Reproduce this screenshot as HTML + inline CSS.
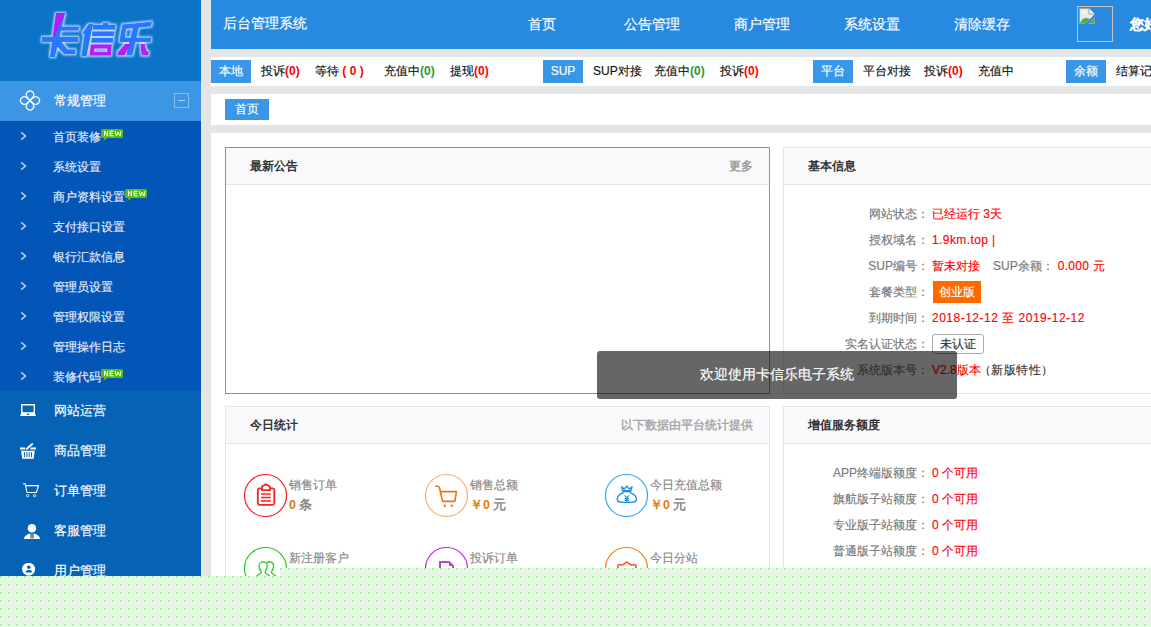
<!DOCTYPE html>
<html><head><meta charset="utf-8">
<style>
*{margin:0;padding:0;box-sizing:border-box}
html,body{-webkit-text-stroke:0.15px currentColor;width:1151px;height:627px;overflow:hidden;background:#e5e5e5;font-family:"Liberation Sans",sans-serif;font-size:12px;color:#333}
.a{position:absolute;white-space:nowrap}
#side{position:absolute;left:0;top:0;width:201px;height:627px;background:#0562b5}
#logo{position:absolute;left:0;top:0;width:201px;height:81px;background:#0b74c9}
#act{position:absolute;left:0;top:81px;width:201px;height:40px;background:#3d95e5}
#sub{position:absolute;left:0;top:121px;width:201px;height:270px;background:#0355b8}
.si{position:absolute;left:0;width:201px;height:30px;line-height:30px;color:#e6eef8;font-size:12px}
.si .t{position:absolute;left:53px;top:1px}
.si .ch{position:absolute;left:20px;top:11px;width:8px;height:8px}
.mi{position:absolute;left:0;width:201px;height:40px;line-height:40px;color:#fff;font-size:13px}
.mi .t{position:absolute;left:54px;top:0}
.new{position:absolute;width:23px;height:13px}
#hdr{position:absolute;left:211px;top:0;width:940px;height:49px;background:#2889e0;color:#fff}
.nav{position:absolute;top:0;width:110px;height:49px;line-height:48px;text-align:center;font-size:14px}
#bar{position:absolute;left:211px;top:57px;width:940px;height:29px;background:#fff}
.bd{position:absolute;top:3px;height:23px;width:40px;line-height:23px;text-align:center;background:#3a96e6;color:#fff;font-size:12px}
.it{position:absolute;white-space:nowrap;top:0;line-height:29px;font-size:12px;color:#111}
.r{color:#f00;font-weight:bold}
.g{color:#2a9a2a;font-weight:bold}
#crumb{position:absolute;left:211px;top:94px;width:940px;height:31px;background:#fff}
#main{position:absolute;left:211px;top:133px;width:940px;height:494px;background:#fff}
.pn{position:absolute;border:1px solid #e6e6e6;background:#fff}
.ph{position:absolute;left:0;top:0;right:0;height:37px;background:#f9f9fb;border-bottom:1px solid #e6e6e6}
.pt{position:absolute;left:24px;top:0;line-height:37px;font-weight:bold;color:#333;font-size:12px}
.pr{position:absolute;right:16px;top:0;line-height:37px;color:#999;font-weight:bold;font-size:12px}
.lb{position:absolute;text-align:right;color:#777;font-size:12px;line-height:16px}
.vl{position:absolute;color:#f00;font-size:12px;line-height:16px}
#ov{position:absolute;left:0;top:576px;width:1151px;height:51px}
#ov2{position:absolute;left:280px;top:568px;width:871px;height:59px}
b,.r,.g,.pt,.pr{-webkit-text-stroke:0}
</style></head><body>
<div id="side">
  <div id="logo">
    <svg class="a" style="left:0;top:0" width="201" height="81" viewBox="0 0 201 81">
      <defs>
        <filter id="gl" x="-20%" y="-20%" width="140%" height="140%">
          <feMorphology in="SourceAlpha" operator="dilate" radius="0.8" result="d"/>
          <feGaussianBlur in="d" stdDeviation="0.9" result="b"/>
          <feFlood flood-color="#e0f0ff" flood-opacity="0.9"/>
          <feComposite in2="b" operator="in" result="w"/>
          <feMerge><feMergeNode in="w"/><feMergeNode in="SourceGraphic"/></feMerge>
        </filter>
      </defs>
      <g filter="url(#gl)">
        <polygon points="56,13 65.2,13 55,57 49.8,57" fill="#2878ff"/>
        <polygon points="56,13 65.2,13 51.9,43" fill="#b31aff"/>
        <polygon points="59.5,26.5 79,26.5 78.8,30.8 58.5,30.8" fill="#2878ff"/>
        <polygon points="42,36.8 78.2,36.8 78,42 41.8,42" fill="#2878ff"/>
        <polygon points="56.5,42 61.5,42 67.5,49.2 75.5,49.2 75.3,54.2 64.5,54.2 55.5,45" fill="#2878ff"/>
        <polygon points="88.6,24 93.2,24 86.6,56 81.4,56 84.3,34.5 82.4,33" fill="#2878ff"/>
        <polygon points="103,23 108.6,23 108.6,25 103,25" fill="#2878ff"/>
        <polygon points="93,24.7 115.6,24.7 115.2,29.7 92.5,29.7" fill="#2878ff"/>
        <polygon points="92.3,31.2 114.2,31.2 113.8,36.2 91.8,36.2" fill="#2878ff"/>
        <polygon points="91.5,37.7 113.4,37.7 113,42.7 91,42.7" fill="#2878ff"/>
        <path d="M90.6,44.2 H112 L110.9,55.7 H89.4 Z M94.4,48.8 V51.9 H107.1 V48.8 Z" fill="#b31aff" fill-rule="evenodd"/>
        <polygon points="122.4,24.6 152,21.4 151.2,26.6 125.2,29.1" fill="#2878ff"/>
        <polygon points="122.4,24.6 126.6,24.6 125,38 119.8,38" fill="#2878ff"/>
        <polygon points="119.8,37.5 151.2,37.5 150.8,42 119.4,42" fill="#2878ff"/>
        <polygon points="133,27 139,27 132.4,55.6 126,55.6" fill="#2878ff"/>
        <polygon points="124.8,44 130.6,44 124.6,55.6 117.2,55.6 117.6,52.6" fill="#b31aff"/>
        <polygon points="140.3,44 144.8,44 146.4,50.6 148.8,51.8 148.6,55.6 141.5,55.6" fill="#b31aff"/>
      </g>
    </svg>
  </div>
  <div id="act">
    <svg class="a" style="left:10px;top:9px" width="40" height="22" viewBox="-20 -10.5 40 22" fill="none" stroke="#fff" stroke-width="1.2"><path transform="rotate(0)" d="M0,0 L-2.85,-3.44 A3.7,3.7 0 1 1 2.85,-3.44 Z"/><path transform="rotate(90)" d="M0,0 L-2.85,-3.44 A3.7,3.7 0 1 1 2.85,-3.44 Z"/><path transform="rotate(180)" d="M0,0 L-2.85,-3.44 A3.7,3.7 0 1 1 2.85,-3.44 Z"/><path transform="rotate(270)" d="M0,0 L-2.85,-3.44 A3.7,3.7 0 1 1 2.85,-3.44 Z"/></svg>
    <div class="a" style="left:54px;top:0;line-height:40px;font-size:13px;color:#fff">常规管理</div>
    <div class="a" style="left:174px;top:12px;width:15px;height:15px;border:1px solid rgba(255,255,255,.38)"></div>
    <div class="a" style="left:178px;top:19px;width:7px;height:1px;background:rgba(255,255,255,.6)"></div>
  </div>
  <div id="sub">
<div class="si" style="top:0px"><svg class="ch" viewBox="0 0 8 8"><path d="M1.3,0.4 L5.4,4 L1.3,7.6" fill="none" stroke="#bcd3f0" stroke-width="1.5"/></svg><span class="t">首页装修</span><svg class="new" style="left:101px;top:8px" width="23" height="13" viewBox="0 0 23 13"><path d="M1,0 H21 L22,1 V8 L21,9 H6.5 Q4.5,11 2.3,12 Q3.6,10.5 3.2,9 H1 L0,8 V1 Z" fill="#52bf0c"/><path d="M3.5,7.2 V1.9 L6.6,7.2 V1.9 M12.6,2.2 H9.1 V6.8 H12.6 M9.1,4.5 H12.2 M14.3,2 L15.4,7 L17.2,3.2 L19,7 L20.1,2" fill="none" stroke="#fff" stroke-width="1"/></svg></div>
<div class="si" style="top:30px"><svg class="ch" viewBox="0 0 8 8"><path d="M1.3,0.4 L5.4,4 L1.3,7.6" fill="none" stroke="#bcd3f0" stroke-width="1.5"/></svg><span class="t">系统设置</span></div>
<div class="si" style="top:60px"><svg class="ch" viewBox="0 0 8 8"><path d="M1.3,0.4 L5.4,4 L1.3,7.6" fill="none" stroke="#bcd3f0" stroke-width="1.5"/></svg><span class="t">商户资料设置</span><svg class="new" style="left:125px;top:8px" width="23" height="13" viewBox="0 0 23 13"><path d="M1,0 H21 L22,1 V8 L21,9 H6.5 Q4.5,11 2.3,12 Q3.6,10.5 3.2,9 H1 L0,8 V1 Z" fill="#52bf0c"/><path d="M3.5,7.2 V1.9 L6.6,7.2 V1.9 M12.6,2.2 H9.1 V6.8 H12.6 M9.1,4.5 H12.2 M14.3,2 L15.4,7 L17.2,3.2 L19,7 L20.1,2" fill="none" stroke="#fff" stroke-width="1"/></svg></div>
<div class="si" style="top:90px"><svg class="ch" viewBox="0 0 8 8"><path d="M1.3,0.4 L5.4,4 L1.3,7.6" fill="none" stroke="#bcd3f0" stroke-width="1.5"/></svg><span class="t">支付接口设置</span></div>
<div class="si" style="top:120px"><svg class="ch" viewBox="0 0 8 8"><path d="M1.3,0.4 L5.4,4 L1.3,7.6" fill="none" stroke="#bcd3f0" stroke-width="1.5"/></svg><span class="t">银行汇款信息</span></div>
<div class="si" style="top:150px"><svg class="ch" viewBox="0 0 8 8"><path d="M1.3,0.4 L5.4,4 L1.3,7.6" fill="none" stroke="#bcd3f0" stroke-width="1.5"/></svg><span class="t">管理员设置</span></div>
<div class="si" style="top:180px"><svg class="ch" viewBox="0 0 8 8"><path d="M1.3,0.4 L5.4,4 L1.3,7.6" fill="none" stroke="#bcd3f0" stroke-width="1.5"/></svg><span class="t">管理权限设置</span></div>
<div class="si" style="top:210px"><svg class="ch" viewBox="0 0 8 8"><path d="M1.3,0.4 L5.4,4 L1.3,7.6" fill="none" stroke="#bcd3f0" stroke-width="1.5"/></svg><span class="t">管理操作日志</span></div>
<div class="si" style="top:240px"><svg class="ch" viewBox="0 0 8 8"><path d="M1.3,0.4 L5.4,4 L1.3,7.6" fill="none" stroke="#bcd3f0" stroke-width="1.5"/></svg><span class="t">装修代码</span><svg class="new" style="left:101px;top:8px" width="23" height="13" viewBox="0 0 23 13"><path d="M1,0 H21 L22,1 V8 L21,9 H6.5 Q4.5,11 2.3,12 Q3.6,10.5 3.2,9 H1 L0,8 V1 Z" fill="#52bf0c"/><path d="M3.5,7.2 V1.9 L6.6,7.2 V1.9 M12.6,2.2 H9.1 V6.8 H12.6 M9.1,4.5 H12.2 M14.3,2 L15.4,7 L17.2,3.2 L19,7 L20.1,2" fill="none" stroke="#fff" stroke-width="1"/></svg></div>

  </div>
<div class="mi" style="top:391px"><svg class="a" style="left:20px;top:13px" width="17" height="13" viewBox="0 0 17 13"><path d="M1.8,0.8 H14.3 V9 H1.8 Z" fill="none" stroke="#fff" stroke-width="1.4"/><path d="M1.3,8.7 H14.8 L16,11.9 H0 Z" fill="#fff"/><ellipse cx="8" cy="10.3" rx="1.5" ry="0.7" fill="#0562b5"/></svg><span class="t">网站运营</span></div>
<div class="mi" style="top:431px"><svg class="a" style="left:19px;top:11px" width="18" height="17" viewBox="0 0 18 17"><path d="M1,6.5 H6 M11.5,6.5 H17" stroke="#fff" stroke-width="1.8"/><path d="M7.6,7 L13.2,2" stroke="#fff" stroke-width="1.8" stroke-linecap="round"/><path d="M2,8.8 H15.8 L14.6,16.7 H3.3 Z" fill="#fff"/><path d="M5.6,10.2 V15.2 M7.9,10.2 V15.2 M10.2,10.2 V15.2 M12.5,10.2 V15.2" stroke="#0562b5" stroke-width="1"/></svg><span class="t">商品管理</span></div>
<div class="mi" style="top:471px"><svg class="a" style="left:22px;top:12px" width="17" height="15" viewBox="0 0 17 15"><path d="M1,0.8 H3.2 L5,9.5 H14.5 L16.4,2.6 H3.6" fill="none" stroke="#fff" stroke-width="1.1"/><circle cx="5.6" cy="12.6" r="1.1" fill="none" stroke="#fff" stroke-width="0.9"/><circle cx="12.6" cy="12.6" r="1.1" fill="none" stroke="#fff" stroke-width="0.9"/></svg><span class="t">订单管理</span></div>
<div class="mi" style="top:511px"><svg class="a" style="left:23px;top:12px" width="18" height="17" viewBox="0 0 18 17"><circle cx="8.9" cy="5.2" r="4.3" fill="#fff"/><path d="M0.8,15.9 C1.5,12.5 5,10.5 9,10.5 C13,10.5 16.5,12.5 17.1,15.9 Z" fill="#fff"/><rect x="7.4" y="10.3" width="3.2" height="5" fill="#0562b5"/><rect x="8.5" y="11.2" width="1" height="3.8" fill="#9fc0e4"/></svg><span class="t">客服管理</span></div>
<div class="mi" style="top:551px"><svg class="a" style="left:21px;top:12px" width="15" height="15" viewBox="0 0 15 15"><circle cx="7.6" cy="6.2" r="6.5" fill="#fff"/><circle cx="7.8" cy="4.3" r="1.8" fill="#0562b5"/><path d="M4.5,9.6 C4.6,7.6 6,7 7.8,7 C9.6,7 11,7.6 11.1,9.6 Z" fill="#0562b5"/></svg><span class="t">用户管理</span></div>

</div>
<div id="hdr">
  <div class="a" style="left:12px;top:0;line-height:47px;font-size:14px">后台管理系统</div>
  <div class="nav" style="left:276px">首页</div>
  <div class="nav" style="left:386px">公告管理</div>
  <div class="nav" style="left:496px">商户管理</div>
  <div class="nav" style="left:606px">系统设置</div>
  <div class="nav" style="left:716px">清除缓存</div>
  <div class="a" style="left:866px;top:6px;width:36px;height:36px;border:1px solid #c9c0b0"></div>
  <svg class="a" style="left:868px;top:8px" width="16" height="16" viewBox="0 0 16 16">
    <path d="M0.5,0.5 H10 L15.5,6 V15.5 H0.5 Z" fill="#e8eaf2" stroke="#a89c8c"/>
    <path d="M10,0.5 V6 H15.5" fill="#fff" stroke="#a89c8c"/>
    <path d="M3,5 L5,3 L7,5 Z" fill="#fff"/>
    <path d="M1,15 C3,10 7,9 11,11 L7,15 Z" fill="#5cae3c"/>
    <path d="M10,15 L15,10 V15 Z" fill="#5cae3c"/>
    <path d="M6,16 L16,6 V9 L9,16 Z" fill="#2889e0"/>
  </svg>
  <div class="a" style="left:919px;top:0;line-height:48px;font-size:14px;font-weight:bold">您好，admin</div>
</div>
<div id="bar">
  <div class="bd" style="left:0">本地</div>
  <div class="it" style="left:50px">投诉<span class="r">(0)</span></div>
  <div class="it" style="left:104px">等待 <span class="r">( 0 )</span></div>
  <div class="it" style="left:173px">充值中<span class="g">(0)</span></div>
  <div class="it" style="left:239px">提现<span class="r">(0)</span></div>
  <div class="bd" style="left:332px">SUP</div>
  <div class="it" style="left:382px">SUP对接</div>
  <div class="it" style="left:443px">充值中<span class="g">(0)</span></div>
  <div class="it" style="left:509px">投诉<span class="r">(0)</span></div>
  <div class="bd" style="left:602px">平台</div>
  <div class="it" style="left:652px">平台对接</div>
  <div class="it" style="left:713px">投诉<span class="r">(0)</span></div>
  <div class="it" style="left:767px">充值中</div>
  <div class="bd" style="left:855px">余额</div>
  <div class="it" style="left:905px">结算记录</div>
</div>
<div id="crumb">
  <div class="a" style="left:14px;top:5px;width:44px;height:21px;line-height:21px;text-align:center;background:#3a96e6;color:#fff;font-size:12px">首页</div>
</div>
<div id="main">
  <div class="pn" style="left:14px;top:14px;width:545px;height:247px;border-color:#5a9be8">
    <div class="ph"><div class="pt">最新公告</div><div class="pr">更多</div></div>
  </div>
  <div class="pn" style="left:572px;top:14px;width:545px;height:247px">
    <div class="ph"><div class="pt">基本信息</div></div>
  </div>
  <div class="pn" style="left:14px;top:273px;width:545px;height:300px">
    <div class="ph"><div class="pt">今日统计</div><div class="pr" style="color:#aaa">以下数据由平台统计提供</div></div>
  </div>
  <div class="pn" style="left:572px;top:273px;width:545px;height:300px">
    <div class="ph"><div class="pt">增值服务额度</div></div>
  </div>
</div>
<div class="a" style="left:729px;top:202.5px;width:200px;height:22px;line-height:22px;text-align:right;color:#777">网站状态：</div><div class="a" style="left:932px;top:202.5px;height:22px;line-height:22px;display:flex;align-items:center"><span style="color:#f00">已经运行 3天</span></div>
<div class="a" style="left:729px;top:229.0px;width:200px;height:22px;line-height:22px;text-align:right;color:#777">授权域名：</div><div class="a" style="left:932px;top:229.0px;height:22px;line-height:22px;display:flex;align-items:center"><span style="color:#f00;letter-spacing:0.4px">1.9km.top |</span></div>
<div class="a" style="left:729px;top:254.8px;width:200px;height:22px;line-height:22px;text-align:right;color:#777">SUP编号：</div><div class="a" style="left:932px;top:254.8px;height:22px;line-height:22px;display:flex;align-items:center"><span style="color:#f00">暂未对接</span><span style="color:#777;margin-left:13px">SUP余额：</span><span style="color:#f00;margin-left:4px;letter-spacing:0.3px">0.000 元</span></div>
<div class="a" style="left:729px;top:280.5px;width:200px;height:22px;line-height:22px;text-align:right;color:#777">套餐类型：</div><div class="a" style="left:932px;top:280.5px;height:22px;line-height:22px;display:flex;align-items:center"><span style="display:inline-block;background:#ff6a00;color:#fff;width:48px;height:22px;line-height:22px;text-align:center;margin-left:1px">创业版</span></div>
<div class="a" style="left:729px;top:306.6px;width:200px;height:22px;line-height:22px;text-align:right;color:#777">到期时间：</div><div class="a" style="left:932px;top:306.6px;height:22px;line-height:22px;display:flex;align-items:center"><span style="color:#f00;letter-spacing:0.5px">2018-12-12 至 2019-12-12</span></div>
<div class="a" style="left:729px;top:332.6px;width:200px;height:22px;line-height:22px;text-align:right;color:#777">实名认证状态：</div><div class="a" style="left:932px;top:332.6px;height:22px;line-height:22px;display:flex;align-items:center"><span style="display:inline-block;background:#fff;color:#333;border:1px solid #aaa;border-radius:3px;width:52px;height:20px;line-height:18px;text-align:center">未认证</span></div>
<div class="a" style="left:729px;top:358.7px;width:200px;height:22px;line-height:22px;text-align:right;color:#777">系统版本号：</div><div class="a" style="left:932px;top:358.7px;height:22px;line-height:22px;display:flex;align-items:center"><span style="color:#f00">V2.8版本</span><span style="color:#333;margin-left:-2px;letter-spacing:0.5px">（新版特性）</span></div>
<div class="a" style="left:729px;top:461.8px;width:200px;height:22px;line-height:22px;text-align:right;color:#777">APP终端版额度：</div><div class="a" style="left:932px;top:461.8px;height:22px;line-height:22px;display:flex;align-items:center"><span style="color:#f00">0 个可用</span></div>
<div class="a" style="left:729px;top:487.8px;width:200px;height:22px;line-height:22px;text-align:right;color:#777">旗航版子站额度：</div><div class="a" style="left:932px;top:487.8px;height:22px;line-height:22px;display:flex;align-items:center"><span style="color:#f00">0 个可用</span></div>
<div class="a" style="left:729px;top:514.0px;width:200px;height:22px;line-height:22px;text-align:right;color:#777">专业版子站额度：</div><div class="a" style="left:932px;top:514.0px;height:22px;line-height:22px;display:flex;align-items:center"><span style="color:#f00">0 个可用</span></div>
<div class="a" style="left:729px;top:540.2px;width:200px;height:22px;line-height:22px;text-align:right;color:#777">普通版子站额度：</div><div class="a" style="left:932px;top:540.2px;height:22px;line-height:22px;display:flex;align-items:center"><span style="color:#f00">0 个可用</span></div>
<svg class="a" style="left:244px;top:474px" width="43" height="43" viewBox="0 0 43 43"><circle cx="21.5" cy="21.5" r="21" fill="none" stroke="#ff2020" stroke-width="1.2"/><path d="M17.6,14.3 H15.6 A1.8,1.8 0 0 0 13.8,16.1 V29.1 A1.8,1.8 0 0 0 15.6,30.9 H28.5 A1.8,1.8 0 0 0 30.3,29.1 V16.1 A1.8,1.8 0 0 0 28.5,14.3 H26.2" fill="none" stroke="#ff2020" stroke-width="1.8"/><path d="M17.9,16.2 V12.6 L21.9,10.2 L25.9,12.6 V16.2 Z" fill="none" stroke="#ff2020" stroke-width="1.8" stroke-linejoin="round"/><path d="M17,20 H26.8 M17,23.4 H26.8 M17,27 H26.8" stroke="#ff2020" stroke-width="1.5"/></svg><div class="a" style="left:289px;top:475px;line-height:20px;color:#888">销售订单</div><div class="a" style="left:289px;top:495px;line-height:20px;font-size:12.5px"><b style="color:#d47b10">0</b> <b style="color:#888">条</b></div>
<svg class="a" style="left:425px;top:474px" width="43" height="43" viewBox="0 0 43 43"><circle cx="21.5" cy="21.5" r="21" fill="none" stroke="#ffae6e" stroke-width="1.2"/><path d="M10.2,12.3 H12.8 Q14,12.3 14.5,14 L17.6,27.4 H29.8 L31.5,17.6 H15.6" fill="none" stroke="#e87412" stroke-width="1.6" stroke-linejoin="round"/><circle cx="19.8" cy="31.8" r="1.2" fill="#e87412"/><circle cx="26.7" cy="31.8" r="1.2" fill="#e87412"/></svg><div class="a" style="left:470px;top:475px;line-height:20px;color:#888">销售总额</div><div class="a" style="left:470px;top:495px;line-height:20px;font-size:12.5px"><b style="color:#e67e10">￥0</b> <b style="color:#888">元</b></div>
<svg class="a" style="left:605px;top:474px" width="43" height="43" viewBox="0 0 43 43"><circle cx="21.5" cy="21.5" r="21" fill="none" stroke="#3aaaf0" stroke-width="1.2"/><path d="M16.6,12.8 L19.1,15 L21.8,12.2 L24.5,15 L27.1,12.8 L26,16.6 H17.7 Z" fill="none" stroke="#1a90e0" stroke-width="1.3" stroke-linejoin="round"/><path d="M17.4,17.6 H26.2" stroke="#1a90e0" stroke-width="1.4"/><path d="M18.6,18.6 C14,20.2 12.2,23 12.2,25.4 C12.2,27.8 14.5,28.4 21.8,28.4 C29,28.4 31.5,27.8 31.5,25.4 C31.5,23 29.6,20.2 25,18.6" fill="none" stroke="#1a90e0" stroke-width="1.4"/><path d="M19.6,21.4 L21.8,23.8 L24,21.4 M21.8,23.8 V28 M19.6,24.6 H24 M19.6,26.4 H24" fill="none" stroke="#1a90e0" stroke-width="1.2"/></svg><div class="a" style="left:650px;top:475px;line-height:20px;color:#888">今日充值总额</div><div class="a" style="left:650px;top:495px;line-height:20px;font-size:12.5px"><b style="color:#e67e10">￥0</b> <b style="color:#888">元</b></div>
<svg class="a" style="left:244px;top:547px" width="43" height="43" viewBox="0 0 43 43"><circle cx="21.5" cy="21.5" r="21" fill="none" stroke="#22cc22" stroke-width="1.2"/><path d="M12.5,29.5 C14,27 17.3,26.8 17.3,25.2 C17.3,24 15,23 15,19 A4.1,4.1 0 0 1 23.2,19 C23.2,23 21,24 21,25.2 C21,26.8 24.5,27 26,29.5" fill="none" stroke="#22cc22" stroke-width="1.3"/><path d="M22.6,16 A4.1,4.1 0 0 1 29.6,19 C29.6,23 27.4,24 27.4,25.2 C27.4,26.8 30.5,27 32,29.5" fill="none" stroke="#22cc22" stroke-width="1.3"/></svg><div class="a" style="left:289px;top:548px;line-height:20px;color:#888">新注册客户</div>
<svg class="a" style="left:425px;top:547px" width="43" height="43" viewBox="0 0 43 43"><circle cx="21.5" cy="21.5" r="21" fill="none" stroke="#cc22dd" stroke-width="1.2"/><path d="M15,34 V15 H24 L28,19 V34" fill="none" stroke="#c040cc" stroke-width="2"/><path d="M24,15 V19 H28 Z" fill="#c040cc"/></svg><div class="a" style="left:470px;top:548px;line-height:20px;color:#888">投诉订单</div>
<svg class="a" style="left:605px;top:547px" width="43" height="43" viewBox="0 0 43 43"><circle cx="21.5" cy="21.5" r="21" fill="none" stroke="#f08020" stroke-width="1.2"/><path d="M12.5,19.8 C12.5,18 14.2,17.2 15.5,17.8 C17.5,18.6 19,17.4 20.2,16 C21,15 22.6,15 23.4,16 C24.6,17.4 26.1,18.6 28.1,17.8 C29.4,17.2 31.1,18 31.1,19.8 C30.2,21 30.2,23.5 31,25.5" fill="none" stroke="#ff5020" stroke-width="1.6"/><path d="M12.5,19.8 C13.4,21 13.4,23.5 12.6,25.5" fill="none" stroke="#ff5020" stroke-width="1.6"/></svg><div class="a" style="left:650px;top:548px;line-height:20px;color:#888">今日分站</div>
<div class="a" style="left:597px;top:351px;width:360px;height:48px;background:rgba(0,0,0,.6);border-radius:3px;color:#fff;font-size:14px;line-height:47px;text-align:center">欢迎使用卡信乐电子系统</div>
<svg class="a" style="left:0;top:576px" width="280" height="51"><defs><pattern id="dt" width="8" height="8" patternUnits="userSpaceOnUse"><rect width="8" height="8" fill="#e7f5e4"/><rect x="0" y="0" width="1" height="1" fill="#72ee72"/><rect x="1" y="0" width="1" height="1" fill="#f4cff4"/><rect x="0" y="1" width="1" height="1" fill="#f4cff4"/><rect x="2" y="0" width="1" height="1" fill="#def5db"/><rect x="4" y="0" width="1" height="1" fill="#def5db"/><rect x="3" y="0" width="1" height="1" fill="#ebece9"/><rect x="0" y="2" width="1" height="1" fill="#def5db"/><rect x="0" y="4" width="1" height="1" fill="#def5db"/><rect x="0" y="3" width="1" height="1" fill="#ebece9"/></pattern></defs><rect width="280" height="51" fill="url(#dt)"/></svg>
<svg class="a" style="left:280px;top:568px" width="871" height="59"><defs><pattern id="dt2" width="8" height="8" patternUnits="userSpaceOnUse"><rect width="8" height="8" fill="#e7f5e4"/><rect x="0" y="0" width="1" height="1" fill="#72ee72"/><rect x="1" y="0" width="1" height="1" fill="#f4cff4"/><rect x="0" y="1" width="1" height="1" fill="#f4cff4"/><rect x="2" y="0" width="1" height="1" fill="#def5db"/><rect x="4" y="0" width="1" height="1" fill="#def5db"/><rect x="3" y="0" width="1" height="1" fill="#ebece9"/><rect x="0" y="2" width="1" height="1" fill="#def5db"/><rect x="0" y="4" width="1" height="1" fill="#def5db"/><rect x="0" y="3" width="1" height="1" fill="#ebece9"/></pattern></defs><rect width="871" height="59" fill="url(#dt2)"/></svg>

</body></html>
